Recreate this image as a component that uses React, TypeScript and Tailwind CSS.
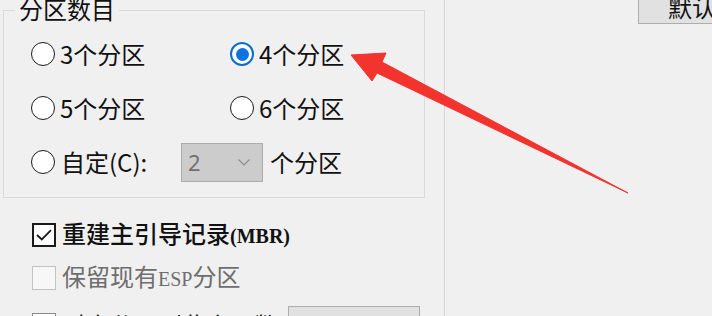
import React from "react";

function Radio({ checked = false }: { checked?: boolean }) {
  if (checked) {
    return (
      <span className="flex h-[24px] w-[24px] shrink-0 items-center justify-center rounded-full border-[2px] border-[#0a6ed1] bg-white">
        <span className="h-[13px] w-[13px] rounded-full bg-[#0c74e0]" />
      </span>
    );
  }
  return <span className="h-[24px] w-[24px] shrink-0 rounded-full border-[1.5px] border-[#1a1a1a] bg-white" />;
}

function RadioItem({ label, checked = false }: { label: React.ReactNode; checked?: boolean }) {
  return (
    <div className="flex h-[54px] items-center gap-[5px]">
      <Radio checked={checked} />
      <span className="text-[24px] leading-[24px] text-[#111]">{label}</span>
    </div>
  );
}

export default function App() {
  return (
    <div className="relative flex h-[316px] w-[712px] overflow-hidden bg-[#f0f0f0] font-['Noto_Sans_CJK_SC',sans-serif] text-[#111]">
      {/* left column */}
      <div className="flex w-[445px] shrink-0 flex-col border-r border-[#d6d6d6] pl-[3px]">
        {/* group box */}
        <div className="relative mt-[10px] h-[188px] w-[422px] shrink-0 border border-[#dadada]">
          <div className="absolute left-[11px] top-[-14px] bg-[#f0f0f0] px-[4px] text-[24px] leading-[24px] text-[#111]">
            分区数目
          </div>
          <div className="grid grid-cols-[199px_1fr] pl-[27px] pt-[16px]">
            <RadioItem label="3个分区" />
            <RadioItem label="4个分区" checked />
            <RadioItem label="5个分区" />
            <RadioItem label="6个分区" />
            <div className="col-span-2 flex h-[54px] items-center">
              <Radio />
              <span className="ml-[6px] w-[120px] text-[24px] leading-[24px]">自定(C):</span>
              <div className="flex h-[39px] w-[82px] items-center justify-between border border-[#adadad] bg-[#cccccc] pl-[6px] pr-[12px]">
                <span className="font-['Noto_Sans',sans-serif] text-[22px] leading-[22px] text-[#707070]">2</span>
                <svg width="12" height="7" viewBox="0 0 12 7" fill="none">
                  <path d="M0.5 0.5 L6 6 L11.5 0.5" stroke="#8c8c8c" strokeWidth="1.2" />
                </svg>
              </div>
              <span className="ml-[7px] text-[24px] leading-[24px]">个分区</span>
            </div>
          </div>
        </div>

        {/* checkboxes */}
        <div className="mt-[15px] flex shrink-0 flex-col pl-[29px]">
          <div className="flex h-[43px] shrink-0 items-center gap-[6px]">
            <span className="flex h-[24px] w-[24px] shrink-0 items-center justify-center border-[2px] border-[#1a1a1a] bg-white">
              <svg width="16" height="12" viewBox="0 0 16 12" fill="none">
                <path d="M1 6 L5.8 10.5 L15 1.2" stroke="#1a1a1a" strokeWidth="1.8" />
              </svg>
            </span>
            <span className="text-[24px] leading-[24px] font-medium text-[#111]">
              重建主引导记录<span className="font-['Liberation_Serif',serif] text-[20px] font-semibold">(MBR)</span>
            </span>
          </div>
          <div className="flex h-[43px] shrink-0 items-center gap-[6px]">
            <span className="h-[24px] w-[24px] shrink-0 border-[1.5px] border-[#c2c2c2] bg-[#f7f7f7]" />
            <span className="text-[24px] leading-[24px] text-[#6e6e6e]">
              保留现有<span className="font-['Liberation_Serif',serif] text-[20px]">ESP</span>分区
            </span>
          </div>
          <div className="mt-[4px] flex h-[43px] shrink-0 items-center">
            <span className="h-[24px] w-[24px] shrink-0 border-[1.5px] border-[#8a8a8a] bg-white" />
            <span className="ml-[6px] w-[226px] overflow-hidden whitespace-nowrap text-[24px] leading-[24px] text-[#111]">
              对齐分区到此扇区数
            </span>
            <span className="mt-[3px] h-[40px] w-[132px] shrink-0 self-start border border-[#adadad] bg-[#e1e1e1]" />
          </div>
        </div>
      </div>

      {/* right column */}
      <div className="flex-1 pl-[193px]">
        <div className="flex h-[24px] w-[120px] items-end overflow-hidden border-b border-l border-[#adadad] bg-[#e1e1e1] pl-[29px]">
          <span className="mb-[4px] whitespace-nowrap text-[24px] leading-[24px] text-[#111]">默认</span>
        </div>
      </div>

      {/* red arrow annotation */}
      <svg className="pointer-events-none absolute left-0 top-0" width="712" height="316" viewBox="0 0 712 316">
        <polygon
          points="351,55 386,53 382,62 628,193 377,73 372,81"
          fill="#f3332e"
          stroke="#f3332e"
          strokeWidth="1"
          strokeLinejoin="round"
        />
      </svg>
    </div>
  );
}
